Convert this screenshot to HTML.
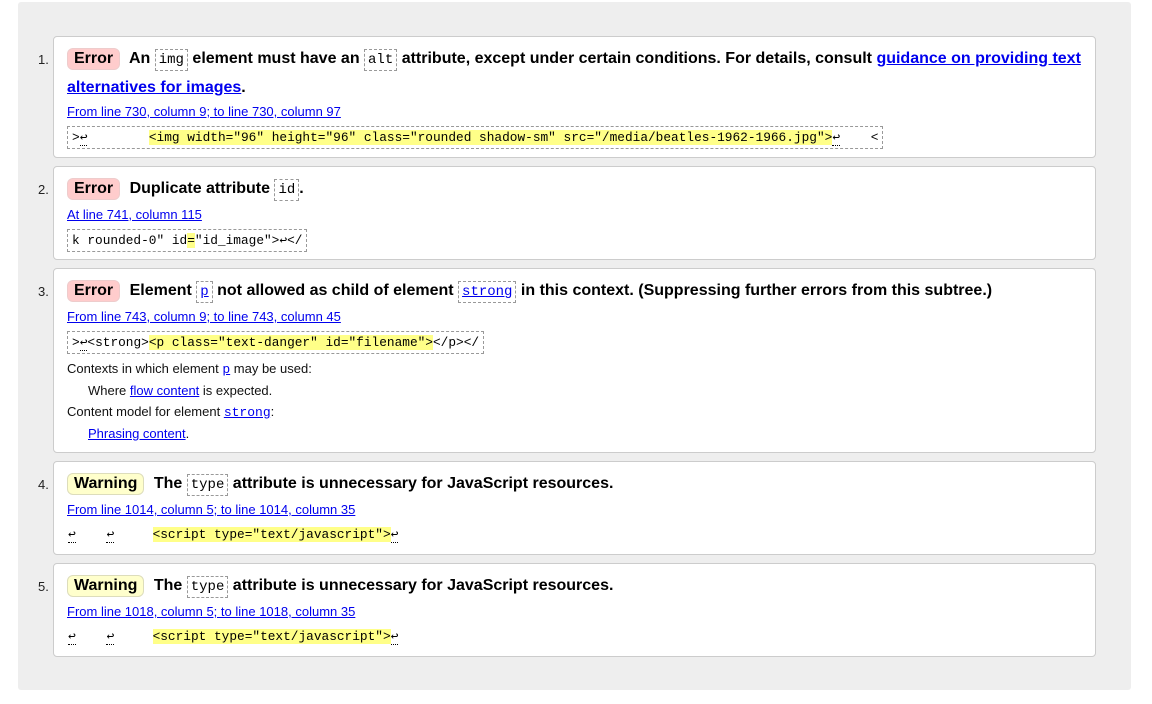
<!DOCTYPE html><html><head><meta charset="utf-8"><style>
body{margin:0;background:#fff;font-family:"Liberation Sans",sans-serif;width:1152px;height:704px;overflow:hidden;position:relative}
.panel{position:absolute;left:18px;top:2px;width:1113px;height:688px;background:#eee;border-radius:3px}
.card{position:absolute;left:53px;width:1041px;background:#fff;border:1px solid #ccc;border-radius:4px}
.num{position:absolute;left:-16px;top:15px;font-size:13px;color:#222}
.t{position:absolute;left:13px;top:8px;font-size:16px;font-weight:bold;line-height:28px;width:1025px;color:#000}
.badge{display:inline-block;padding:0 6px;border-radius:6px;line-height:20px;margin-right:5px}
.err{background:#fcc;border:1px solid #ecc}
.warn{background:#ffc;border:1px solid #ddb}
code,.code{font-family:"Liberation Mono",monospace;font-weight:normal}
.c{border:1px dashed #999;padding:2px 3px;font-size:14px}
a{color:#00e;text-decoration:underline}
.loc{position:absolute;left:13px;font-size:13px}
.ext{position:absolute;left:13px;font-size:12.8px;border:1px dashed #999;padding:2px 4px;font-family:"Liberation Mono",monospace;white-space:pre;line-height:17px}
.ext.nb{border-color:transparent;left:9px;top:0}
.hl{background:#ff8}
.r{border-bottom:1px dotted #000}
.txt{position:absolute;left:13px;font-size:13px;line-height:21px;color:#111}
</style></head><body>
<div class="panel"></div>
<div class="card" style="top:36px;height:120px"><span class="num">1.</span>
<div class="t"><span class="badge err">Error</span> An <code class="c">img</code> element must have an <code class="c">alt</code> attribute, except under certain conditions. For details, consult <a>guidance on providing text alternatives for images</a>.</div>
<a class="loc" style="top:67px">From line 730, column 9; to line 730, column 97</a>
<div class="ext" style="top:89px">&gt;<span class="r">↩</span>        <span class="hl">&lt;img width="96" height="96" class="rounded shadow-sm" src="/media/beatles-1962-1966.jpg"&gt;</span><span class="r">↩</span>    &lt;</div></div>
<div class="card" style="top:166px;height:92px"><span class="num">2.</span>
<div class="t"><span class="badge err">Error</span> Duplicate attribute <code class="c">id</code>.</div>
<a class="loc" style="top:40px">At line 741, column 115</a>
<div class="ext" style="top:62px">k rounded-0" id<span class="hl">=</span>"id_image"&gt;↩&lt;/</div></div>
<div class="card" style="top:268px;height:183px"><span class="num">3.</span>
<div class="t"><span class="badge err">Error</span> Element <code class="c"><a>p</a></code> not allowed as child of element <code class="c"><a>strong</a></code> in this context. (Suppressing further errors from this subtree.)</div>
<a class="loc" style="top:40px">From line 743, column 9; to line 743, column 45</a>
<div class="ext" style="top:62px">&gt;<span class="r">↩</span>&lt;strong&gt;<span class="hl">&lt;p class="text-danger" id="filename"&gt;</span>&lt;/p&gt;&lt;/</div>
<div class="txt" style="top:89px">Contexts in which element <a class="code">p</a> may be used:<br><span style="padding-left:21px">Where <a>flow content</a> is expected.</span><br>Content model for element <a class="code">strong</a>:<br><span style="padding-left:21px"><a>Phrasing content</a>.</span></div></div>
<div class="card" style="top:461px;height:92px"><span class="num">4.</span>
<div class="t"><span class="badge warn">Warning</span> The <code class="c">type</code> attribute is unnecessary for JavaScript resources.</div>
<a class="loc" style="top:40px">From line 1014, column 5; to line 1014, column 35</a>
<div class="ext nb" style="top:61px"><span class="r">↩</span>    <span class="r">↩</span>     <span class="hl">&lt;script type="text/javascript"&gt;</span><span class="r">↩</span></div></div>
<div class="card" style="top:563px;height:92px"><span class="num">5.</span>
<div class="t"><span class="badge warn">Warning</span> The <code class="c">type</code> attribute is unnecessary for JavaScript resources.</div>
<a class="loc" style="top:40px">From line 1018, column 5; to line 1018, column 35</a>
<div class="ext nb" style="top:61px"><span class="r">↩</span>    <span class="r">↩</span>     <span class="hl">&lt;script type="text/javascript"&gt;</span><span class="r">↩</span></div></div>
</body></html>
